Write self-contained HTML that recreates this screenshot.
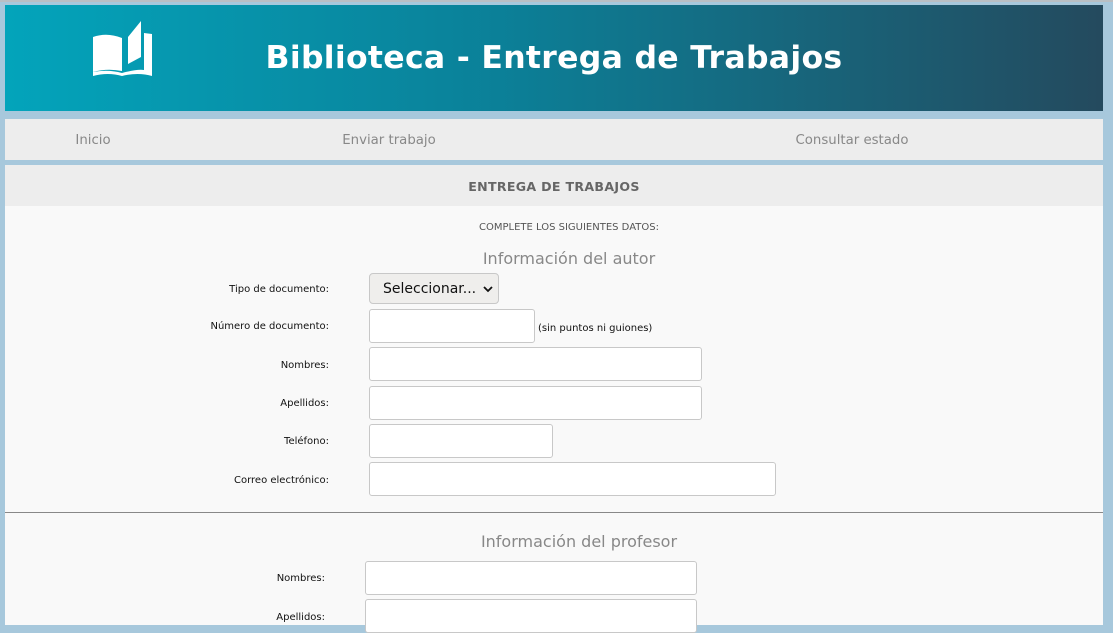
<!DOCTYPE html>
<html><head><meta charset="utf-8"><style>
*{box-sizing:border-box;margin:0;padding:0}
body{width:1113px;height:625px;overflow:hidden;background:#a7c8dc;font-family:"DejaVu Sans","Liberation Sans",sans-serif;position:relative}
.a{position:absolute}
#hdr{left:5px;top:5px;width:1098px;height:106px;background:linear-gradient(90deg,#03a4bb,#0b8098 45%,#244a5e)}
#hdr h1{position:absolute;left:0;width:1098px;top:35px;text-align:center;color:#fff;font-size:31.5px;font-weight:bold;letter-spacing:0.3px}
#nav{left:5px;top:119px;width:1098px;height:41px;background:#ededed}
.nv{position:absolute;top:14px;font-size:13.3px;color:#888;transform:translateX(-50%)}
#sh{left:5px;top:165px;width:1098px;height:41px;background:#ededed;text-align:center;font-size:12.6px;font-weight:bold;color:#666;line-height:43px;letter-spacing:0.3px}
#ct{left:5px;top:206px;width:1098px;height:419px;background:#f9f9f9}
.lb{position:absolute;font-size:10px;color:#111;text-align:right;width:300px}
.in{position:absolute;height:34px;background:#fff;border:1px solid #c8c8c8;border-radius:3px}
.t{position:absolute;width:1098px;left:20px;text-align:center;color:#888}
</style></head><body>
<div class="a" style="left:0;top:0;width:1113px;height:2px;background:#b9bfc4"></div>
<div id="hdr" class="a">
<svg class="a" style="left:88px;top:16px" width="60" height="56" viewBox="0 0 60 56"><path fill="#fff" d="M0 16 Q14 11 29 17 L29 50 Q14 47 0 51 Z"/><path fill="#fff" d="M35 16 L48 0 L48 36 L35 43 Z"/><path fill="#fff" d="M51 12 L59 13 L59 55 Q45 51 29 55 Q15 51 0 55 L0 51 Q15 48 29 52 Q44 48 51 49 Z"/></svg>
<h1>Biblioteca - Entrega de Trabajos</h1></div>
<div id="nav" class="a"><span class="nv" style="left:88px">Inicio</span><span class="nv" style="left:384px">Enviar trabajo</span><span class="nv" style="left:847px">Consultar estado</span></div>
<div id="sh" class="a">ENTREGA DE TRABAJOS</div>
<div id="ct" class="a"></div>
<div class="t" style="top:222px;font-size:10px;color:#555">COMPLETE LOS SIGUIENTES DATOS:</div>
<div class="t" style="top:249px;font-size:16px">Información del autor</div>
<div class="lb" style="left:29px;top:284px">Tipo de documento:</div>
<div class="a" style="left:369px;top:273px;width:130px;height:31px;background:#efeeec;border:1px solid #c8c8c8;border-radius:4px;font-size:14px;line-height:31px;padding-left:13px;color:#111">Seleccionar... <svg width="10" height="8" viewBox="0 0 10 8" style="margin-left:2px"><path d="M1 2 L5 6 L9 2" stroke="#111" stroke-width="1.8" fill="none"/></svg></div>
<div class="lb" style="left:29px;top:321px">Número de documento:</div>
<div class="in" style="left:369px;top:309px;width:166px"></div>
<div class="a" style="left:538px;top:323px;font-size:10px;color:#111">(sin puntos ni guiones)</div>
<div class="lb" style="left:29px;top:360px">Nombres:</div>
<div class="in" style="left:369px;top:347px;width:333px"></div>
<div class="lb" style="left:29px;top:398px">Apellidos:</div>
<div class="in" style="left:369px;top:386px;width:333px"></div>
<div class="lb" style="left:29px;top:436px">Teléfono:</div>
<div class="in" style="left:369px;top:424px;width:184px"></div>
<div class="lb" style="left:29px;top:475px">Correo electrónico:</div>
<div class="in" style="left:369px;top:462px;width:407px"></div>
<div class="a" style="left:5px;top:512px;width:1098px;height:1px;background:#888"></div>
<div class="t" style="top:532px;font-size:16px;left:30px">Información del profesor</div>
<div class="lb" style="left:25px;top:573px">Nombres:</div>
<div class="in" style="left:365px;top:561px;width:332px"></div>
<div class="lb" style="left:25px;top:612px">Apellidos:</div>
<div class="in" style="left:365px;top:599px;width:332px"></div>
</body></html>
